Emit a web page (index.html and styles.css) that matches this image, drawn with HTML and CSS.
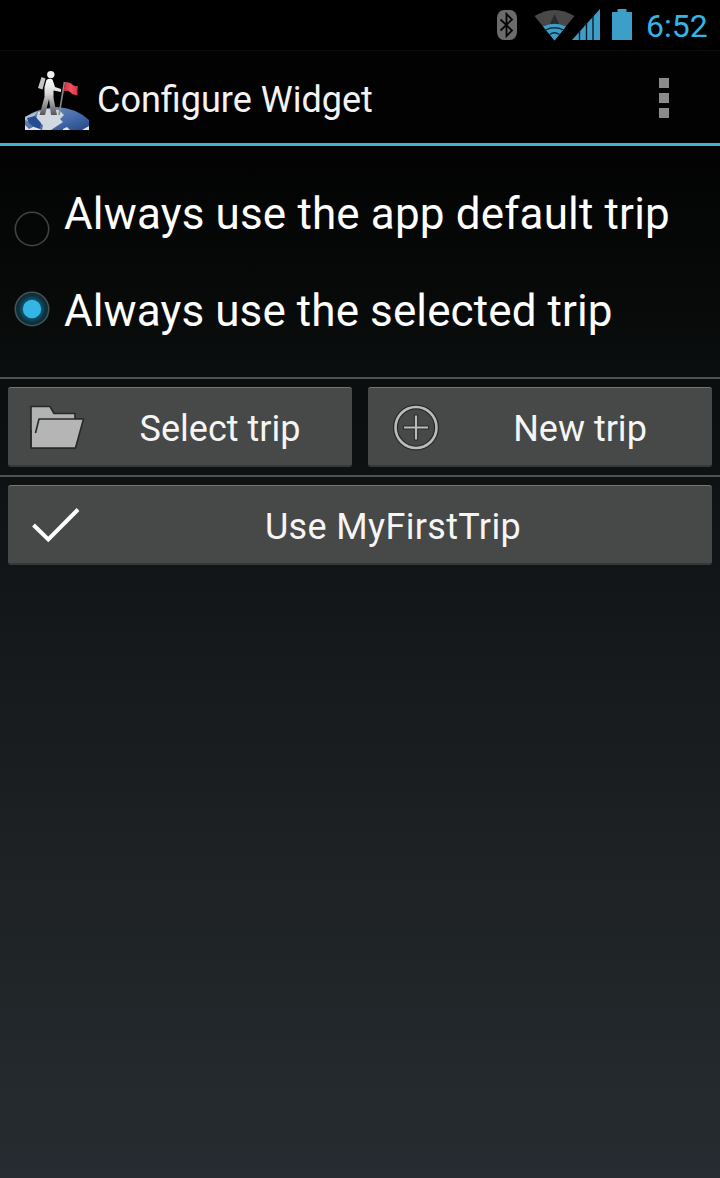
FILE: index.html
```html
<!DOCTYPE html>
<html lang="en">
<head>
<meta charset="utf-8">
<title>Configure Widget</title>
<link rel="stylesheet" href="styles.css">
</head>
<body>
<div class="screen">
  <div class="status-bar">
    <svg class="status-icons" width="160" height="50" viewBox="480 0 160 50">
      <rect x="497" y="10" width="20" height="30" rx="7" ry="8" fill="#6b6b6b"/>
      <path d="M500.500 19.500L512 30.500L506.500 36V14L512 19.500L500.500 30.500" fill="none" stroke="#050505" stroke-width="1.800"/>
      <path d="M534.500 16Q554.500 4 574.500 16L554.500 40.500Z" fill="#484848"/>
      <path d="M554.500 14L559 24H550Z" fill="#2b2b2b"/>
      <path d="M543 26.500Q554.500 21 566 26.500L554.500 40.500Z" fill="#3d9fc8"/>
      <path d="M545.500 30Q554.500 25.500 563.500 30M549.500 34.500Q554.500 31 559.500 34.500" fill="none" stroke="#0b3040" stroke-width="1.300"/>
      <path d="M572 40L600 9V40Z" fill="#3d9fc8"/>
      <path d="M579.500 30V40M586.500 23V40M593 16V40" stroke="#06141b" stroke-width="1.300"/>
      <path d="M612 12H617.500V9H626.500V12H632V40H612Z" fill="#3d9fc8"/>
    </svg>
    <span class="clock">6:52</span>
  </div>
  <header class="action-bar">
    <svg class="app-icon" width="64" height="64" viewBox="25 68 64 64">
      <defs>
        <linearGradient id="earth" x1="0" y1="0" x2="1" y2="1"><stop offset="0" stop-color="#8196b8"/><stop offset=".55" stop-color="#4b6fae"/><stop offset="1" stop-color="#254786"/></linearGradient>
        <linearGradient id="hiker" x1="0" y1="0" x2="0" y2="1"><stop offset="0" stop-color="#fff"/><stop offset=".4" stop-color="#d8d8d8"/><stop offset="1" stop-color="#555"/></linearGradient>
        <linearGradient id="flag"><stop offset="0" stop-color="#c92b40"/><stop offset=".5" stop-color="#f05263"/><stop offset="1" stop-color="#d92f43"/></linearGradient>
      </defs>
      <path d="M25 117Q38 108 57 107Q76 108 89 120V130H25Z" fill="url(#earth)"/>
      <path d="M25 117L38 111L34 116L28 121L25 120Z" fill="#b4bfce"/>
      <path d="M38 112L47 109L59 110L64 115L60 119L63 122L57 126L51 130H42L43 125L36 120Z" fill="#d2d8df"/>
      <path d="M25 125L29 129L37 125L41 130H25ZM63 129L67 127L70 130H63ZM82 130L89 126V130Z" fill="#e1e4e9"/>
      <path d="M27 118L35 116L41 123L40 129L34 127L29 123Z" fill="#274b91"/>
      <path d="M41.500 77L45.500 78.500L42.500 89.500L38 88Z" fill="#c4c5c7"/>
      <circle cx="50.800" cy="74.600" r="3.700" fill="#f1f1f1"/>
      <path d="M46.500 80Q49 78 52.500 79.500L55 87L61 89V92L53.500 90.500L53.500 98L57 115H51L49 99L45 115H39.500L44.500 97L44.500 87Z" fill="url(#hiker)"/>
      <path d="M64.500 82L59 115" stroke="#8a8a8a" stroke-width="1.600"/>
      <path d="M65 82Q70 82 73 85Q75.500 87 78 86Q77 91 77.500 95Q73 96 70 92Q67.500 90 63.500 91Z" fill="url(#flag)"/>
    </svg>
    <h1 class="title">Configure Widget</h1>
    <div class="overflow"><i></i><i></i><i></i></div>
  </header>
  <main>
    <div class="options">
      <label class="option">
        <svg class="radio radio-low" width="36" height="36" viewBox="0 0 36 36"><circle cx="18" cy="18" r="16.700" fill="none" stroke="#424242" stroke-width="1.600"/></svg>
        <span class="option-text first-text">Always use the app default trip</span>
      </label>
      <label class="option">
        <svg class="radio" width="36" height="36" viewBox="0 0 36 36">
          <defs><radialGradient id="glow"><stop offset=".5" stop-color="#155b74"/><stop offset=".8" stop-color="#0c3442"/><stop offset="1" stop-color="#0c262e"/></radialGradient></defs>
          <circle cx="18" cy="18" r="16.700" fill="url(#glow)" stroke="#465254" stroke-width="1.600"/><circle cx="18" cy="18" r="9.200" fill="#33b5e5"/>
        </svg>
        <span class="option-text second-text">Always use the selected trip</span>
      </label>
    </div>
    <div class="button-row">
      <button class="button">
        <svg class="icon" width="64" height="64" viewBox="24 395 64 64" stroke="#262929" stroke-width="1.600" stroke-linejoin="round">
          <path d="M31 406.500H50L54 413.500H75V419H81L75 448H31Z" fill="#b2b4b4"/>
          <path d="M39 419H83.500L75.500 448H31.800V433H35.500Z" fill="#b5b5b5" stroke="none"/>
          <path d="M35.500 433L39 419H83.500L75.500 448H31V430" fill="none"/>
        </svg>
        <span class="label select-label">Select trip</span>
      </button>
      <button class="button">
        <svg class="icon" width="64" height="64" viewBox="384 395 64 64" fill="none">
          <circle cx="416" cy="427.500" r="20.500" stroke="#282828" stroke-width="5"/><circle cx="416" cy="427.500" r="20.500" stroke="#bbb" stroke-width="2.600"/>
          <path d="M403 427.500H429M416 414.500V440.500" stroke="#282828" stroke-width="4.200"/><path d="M404 427.500H428M416 415.500V439.500" stroke="#bbb" stroke-width="2.200"/>
        </svg>
        <span class="label new-label">New trip</span>
      </button>
    </div>
    <div class="button-row">
      <button class="button">
        <svg class="icon" width="64" height="64" viewBox="24 493 64 64"><path d="M33.500 525L48.300 539.500L78 509.500" fill="none" stroke="#fff" stroke-width="4"/></svg>
        <span class="label use-label">Use MyFirstTrip</span>
      </button>
    </div>
  </main>
</div>
</body>
</html>
```
FILE: styles.css
```css
* { box-sizing: border-box; }
body { margin: 0; background: #000; font-family: Roboto, sans-serif; color: #fff; }
.screen { height: 1178px; overflow: hidden; background: linear-gradient(#000 0, #020202 146px, #0b0e0e 380px, #13171a 600px, #1d2123 850px, #262c31 1178px); }
.status-bar { height: 50px; display: flex; justify-content: flex-end; background: #000; }
.status-icons { display: block; }
.clock { width: 80px; padding-left: 6px; font-size: 32px; line-height: 53px; color: #33b5e5; white-space: nowrap; }
.action-bar { height: 96px; display: flex; align-items: center; padding: 0 51px 0 25px; border-top: 1px solid #0c0c0c; border-bottom: 3px solid #41b1d2; background: #020202; }
.app-icon { display: block; margin-top: 6px; }
.title { margin: 5px 0 0 8px; font-size: 36px; font-weight: 400; line-height: 44px; color: #f3f3f3; white-space: nowrap; }
.overflow { margin: 2px 0 0 auto; display: grid; gap: 5px; }
.overflow i { width: 10px; height: 10px; background: #8b8b8b; }
.options { height: 231px; padding: 35px 0 0 14px; }
.option { display: flex; height: 97px; }
.radio { display: block; margin-top: 13px; }
.radio-low { margin-top: 30px; }
.option-text { margin-left: 14px; font-size: 44px; line-height: 66px; white-space: nowrap; }
.first-text { letter-spacing: .15px; }
.second-text { letter-spacing: .1px; }
.button-row { height: 98px; border-top: 2px solid #4e5252; padding: 8px 8px 0; display: flex; gap: 16px; }
.button { flex: 1; height: 80px; display: flex; align-items: flex-start; border: 0; border-top: 1px solid #747676; border-bottom: 2px solid #363939; border-radius: 3px; padding: 7px 16px 0; background: #474848; color: #f5f5f5; font: 36px/68px Roboto, sans-serif; }
.icon { display: block; flex: none; }
.label { flex: 1; text-align: center; white-space: nowrap; }
.select-label, .new-label { padding-left: 16px; }
.use-label { padding-left: 2px; letter-spacing: .35px; }
```
